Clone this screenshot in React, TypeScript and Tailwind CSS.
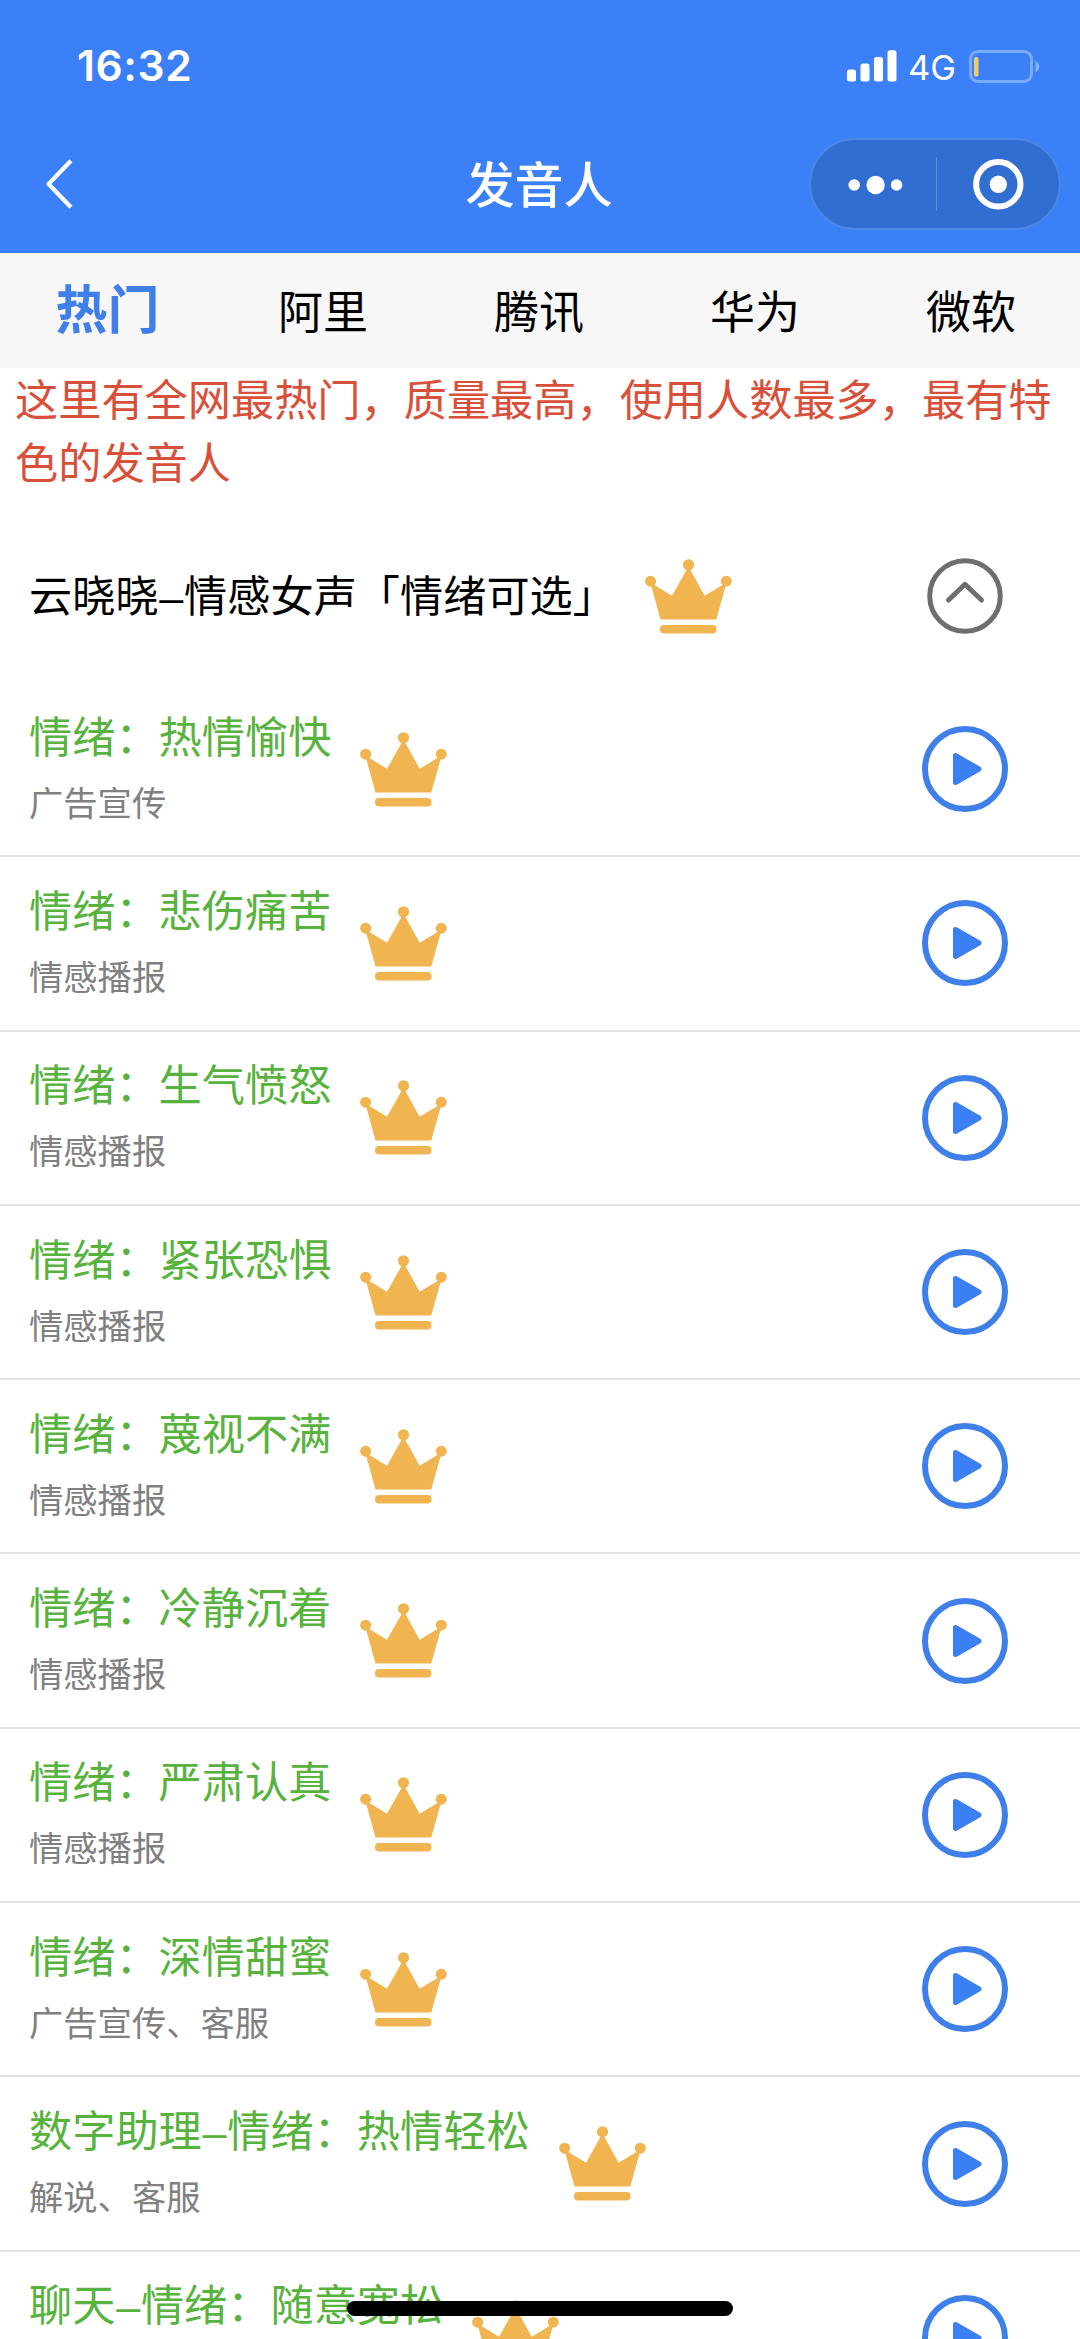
import { useState } from "react"

const tabs = ["热门", "阿里", "腾讯", "华为", "微软"]

const voices = [
  { name: "情绪：热情愉快", usage: "广告宣传" },
  { name: "情绪：悲伤痛苦", usage: "情感播报" },
  { name: "情绪：生气愤怒", usage: "情感播报" },
  { name: "情绪：紧张恐惧", usage: "情感播报" },
  { name: "情绪：蔑视不满", usage: "情感播报" },
  { name: "情绪：冷静沉着", usage: "情感播报" },
  { name: "情绪：严肃认真", usage: "情感播报" },
  { name: "情绪：深情甜蜜", usage: "广告宣传、客服" },
  { name: "数字助理–情绪：热情轻松", usage: "解说、客服" },
  { name: "聊天–情绪：随意宽松", usage: "" },
]

// Voice name, with the dash between its parts set wider than the text font has it
function VoiceName({ name }: { name: string }) {
  const [first, rest] = name.split("–")
  return (
    <>
      {first}
      {rest && (
        <>
          <span className="inline-block w-[25.5px] text-center font-['Liberation_Sans',sans-serif] leading-[30px]">–</span>
          {rest}
        </>
      )}
    </>
  )
}

function CrownIcon() {
  return (
    <svg className="w-[87px] h-[75px] shrink-0" viewBox="0 0 87 75" fill="#f0b550">
      <circle cx="43.5" cy="5.8" r="5.6" />
      <circle cx="5.6" cy="22.2" r="5.5" />
      <circle cx="81.3" cy="22.2" r="5.5" />
      <path d="M43.5 7.5 59.7 36.8 81.6 23.5 71.3 60.5H15.5L5.3 23.5 27 36.8Z" />
      <rect x="15" y="66" width="56.5" height="8.6" rx="4" />
    </svg>
  )
}

function PlayIcon() {
  return (
    <svg className="w-[86px] h-[86px]" viewBox="0 0 86 86" fill="none">
      <circle cx="43" cy="43" r="40" stroke="#3f7fe9" strokeWidth="6" />
      <path
        d="M33.5 29.5v27L57 43Z"
        fill="#3b80f3"
        stroke="#3b80f3"
        strokeWidth="5"
        strokeLinejoin="round"
      />
    </svg>
  )
}

function StatusBar() {
  return (
    <div className="h-[132px] pl-[77px] pr-[40px] flex items-center justify-between">
      <span className="font-semibold text-[42.5px] leading-none tracking-[0.6px] pt-[1px]">16:32</span>
      <div className="flex items-center">
        <svg className="w-[50px] h-[32px]" viewBox="0 0 50 32" fill="#fff">
          <rect x="0" y="19.5" width="9" height="12" rx="2.5" />
          <rect x="13.5" y="13.5" width="9" height="18" rx="2.5" />
          <rect x="27" y="7" width="9" height="24.5" rx="2.5" />
          <rect x="40.5" y="0.3" width="9" height="31.2" rx="2.5" />
        </svg>
        <span className="text-[34.5px] leading-none w-[51px] ml-[11px] mt-[4px]">4G</span>
        <svg className="w-[71px] h-[33px] ml-[10px]" viewBox="0 0 71 33" fill="none">
          <rect x="1.5" y="1.5" width="61" height="30" rx="7.5" stroke="#7bacf9" strokeWidth="3" />
          <rect x="5" y="7" width="4.5" height="19.5" rx="2" fill="#f3cd6a" />
          <path d="M66.5 11c5 2.5 5 9 0 11.5Z" fill="#7bb4fa" />
        </svg>
      </div>
    </div>
  )
}

function NavBar() {
  return (
    <div className="h-[104px] grid grid-cols-3 items-center">
      <button className="pl-[45px] justify-self-start">
        <svg className="w-[28px] h-[50px]" viewBox="0 0 28 50" fill="none" stroke="#fff" strokeWidth="4.2">
          <path d="M26 1.8 3.5 25 26 48.2" strokeLinejoin="round" />
        </svg>
      </button>
      <h1 className="text-center font-medium text-[49px] leading-none pr-[2px] pt-[2px]">发音人</h1>
      <div className="justify-self-end mr-[19px] w-[252px] h-[92px] rounded-full bg-[#306ed1] border-2 border-[#4c86e6] flex items-center">
        <svg className="w-[125px] h-[88px]" viewBox="0 0 125 88" fill="#fff">
          <circle cx="43.2" cy="45" r="5.8" />
          <circle cx="64.6" cy="45" r="9.2" />
          <circle cx="85.6" cy="45" r="5.8" />
        </svg>
        <div className="w-px h-[54px] bg-[#5e91e3]" />
        <svg className="w-[121px] h-[88px]" viewBox="0 0 121 88" fill="none">
          <circle cx="61.3" cy="44.3" r="22.2" stroke="#fff" strokeWidth="6" />
          <circle cx="61.3" cy="44.3" r="8.7" fill="#fff" />
        </svg>
      </div>
    </div>
  )
}

export default function App() {
  const [activeTab, setActiveTab] = useState("热门")
  const [expanded, setExpanded] = useState(true)

  return (
    <div className="relative w-[1080px] h-[2339px] overflow-hidden bg-white font-[Inter,'Noto_Sans_CJK_SC',sans-serif] text-black">
      <header className="h-[253px] bg-[#3b80f6] text-white">
        <StatusBar />
        <NavBar />
      </header>

      <nav className="h-[115px] bg-[#f7f7f7] grid grid-cols-5">
        {tabs.map((tab) => (
          <button
            key={tab}
            onClick={() => setActiveTab(tab)}
            className={
              tab === activeTab
                ? "text-[52px] leading-none font-bold text-[#407fe9] pr-[1px]"
                : "text-[45px] leading-none pr-[2px] pt-[4px]"
            }
          >
            {tab}
          </button>
        ))}
      </nav>

      <p className="pt-[1px] px-[15px] text-[43.2px] leading-[63px] text-[#d8503a]">
        这里有全网最热门，质量最高，使用人数最多，最有特色的发音人
      </p>

      <div className="mt-[15px] h-[172px] pl-[29px] pr-[77px] flex items-center">
        <h2 className="text-[43.2px] leading-none whitespace-nowrap mr-[29px] pt-[2px]">
          <VoiceName name="云晓晓–情感女声「情绪可选」" />
        </h2>
        <CrownIcon />
        <button className="ml-auto" onClick={() => setExpanded(!expanded)}>
          <svg className="w-[76px] h-[76px]" viewBox="0 0 76 76" fill="none" stroke="#6e6e6e" strokeWidth="5">
            <circle cx="38" cy="38" r="35.3" />
            <path d="M21.5 42 38 26.3l16.5 15.7" strokeLinecap="round" strokeLinejoin="round" />
          </svg>
        </button>
      </div>

      {expanded && (
        <ul className="mt-[1px]">
          {voices.map((voice) => (
            <li
              key={voice.name}
              className="h-[174.3px] pl-[29px] pr-[72px] flex items-center border-b-2 border-[#e2e2e2]"
            >
              <div className="flex items-center gap-[29px]">
                <div className="flex flex-col gap-[28px] pb-[2px]">
                  <span className="h-[43px] text-[43.2px] leading-[43px] text-[#57b33e] whitespace-nowrap">
                    <VoiceName name={voice.name} />
                  </span>
                  <span className="h-[34px] text-[34.3px] leading-[34px] text-[#808080] whitespace-nowrap">{voice.usage}</span>
                </div>
                <CrownIcon />
              </div>
              <button className="ml-auto">
                <PlayIcon />
              </button>
            </li>
          ))}
        </ul>
      )}

      {/* home indicator */}
      <div className="absolute left-[347px] top-[2301px] w-[386px] h-[15px] rounded-full bg-black" />
    </div>
  )
}
